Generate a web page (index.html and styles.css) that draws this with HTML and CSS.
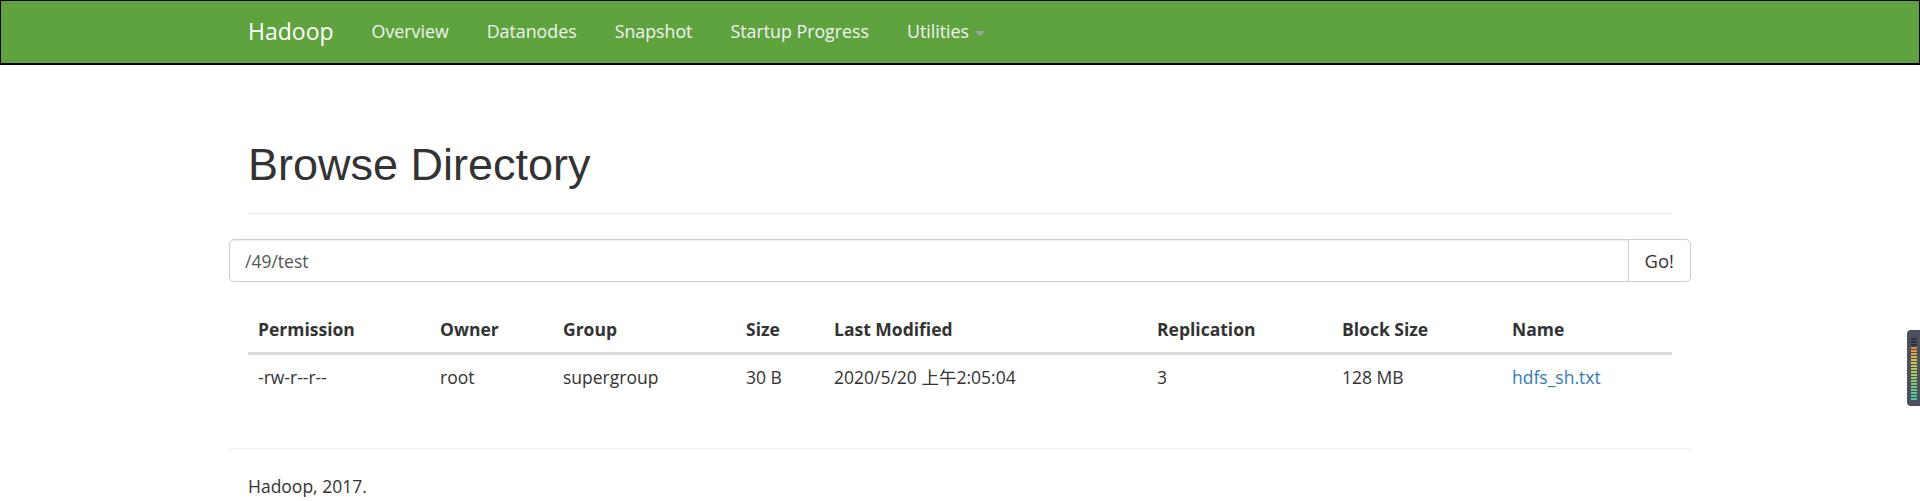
FILE: index.html
```html
<!DOCTYPE html>
<html lang="en">
<head>
  <meta charset="UTF-8" />
  <title>Browsing HDFS</title>
  <link rel="stylesheet" href="styles.css">
</head>
<body>
  <header class="navbar">
    <div class="navbar-inner">
      <a class="navbar-brand" href="#">Hadoop</a>
      <ul class="navbar-nav">
        <li><a href="#">Overview</a></li>
        <li><a href="#">Datanodes</a></li>
        <li><a href="#">Snapshot</a></li>
        <li><a href="#">Startup Progress</a></li>
        <li><a href="#">Utilities <span class="caret"></span></a></li>
      </ul>
    </div>
  </header>

  <main class="container">
    <div class="page-header">
      <h1>Browse Directory</h1>
    </div>

    <div class="row">
      <form class="input-group" onsubmit="return false;">
        <input type="text" class="form-control" value="/49/test" />
        <button class="btn" type="submit">Go!</button>
      </form>
    </div>

    <div class="listing">
      <table class="table">
        <thead>
          <tr>
            <th class="col-perm">Permission</th>
            <th class="col-owner">Owner</th>
            <th class="col-group">Group</th>
            <th class="col-size">Size</th>
            <th class="col-mod">Last Modified</th>
            <th class="col-repl">Replication</th>
            <th class="col-block">Block Size</th>
            <th class="col-name">Name</th>
          </tr>
        </thead>
        <tbody>
          <tr>
            <td>-rw-r--r--</td>
            <td>root</td>
            <td>supergroup</td>
            <td>30 B</td>
            <td>2020/5/20 上午2:05:04</td>
            <td>3</td>
            <td>128 MB</td>
            <td><a href="#">hdfs_sh.txt</a></td>
          </tr>
        </tbody>
      </table>
    </div>

    <footer class="row page-footer">
      <hr />
      <p>Hadoop, 2017.</p>
    </footer>
  </main>

  <!-- desktop level meter overlay -->
  <div class="meter"><div class="meter-bars"></div></div>
</body>
</html>
```

FILE: styles.css
```css
body {
  margin: 0;
  font-family: "Open Sans", "Noto Sans CJK SC", sans-serif;
  font-size: 17.5px;
  line-height: 25px;
  color: #333;
  background: #fff;
}
a {
  color: #337ab7;
  text-decoration: none;
}

.navbar {
  background-color: #5fa33e;
  border: 1px solid #000;
  border-bottom-width: 2px;
  height: 65px;
  box-sizing: border-box;
}
.navbar-inner {
  width: 1462px;
  margin: 0 auto;
  padding: 0 19px;
  box-sizing: border-box;
  display: flex;
}
.navbar-brand {
  margin-left: -19px;
  padding: 18px 19px;
  font-size: 23px;
  line-height: 25px;
  color: #fff;
}
.navbar-nav {
  list-style: none;
  margin: 0;
  padding: 0;
  display: flex;
}
.navbar-nav a {
  display: block;
  padding: 18px 19px;
  font-size: 17.8px;
  color: #f2f2f2;
}
.caret {
  display: inline-block;
  width: 0;
  height: 0;
  margin-left: 1px;
  vertical-align: middle;
  border-top: 5px solid #a3a3a3;
  border-left: 5px solid transparent;
  border-right: 5px solid transparent;
}

.container {
  width: 1462px;
  margin: 0 auto;
  padding: 0 19px;
  box-sizing: border-box;
}
.row {
  margin: 0 -19px;
}
.page-header {
  margin: 75px 0 25px;
  padding-bottom: 11px;
  border-bottom: 1px solid #eee;
}
.page-header h1 {
  margin: 0 0 12.5px;
  font-family: "Liberation Sans", Arial, sans-serif;
  font-size: 45px;
  font-weight: normal;
  line-height: 49.5px;
}

.input-group {
  display: flex;
  margin: 0;
}
.form-control {
  flex: 1;
  height: 43px;
  box-sizing: border-box;
  padding: 7px 15px;
  font: inherit;
  color: #555;
  border: 1px solid #ccc;
  border-radius: 5px 0 0 5px;
  box-shadow: inset 0 1px 1px rgba(0,0,0,0.075);
  outline: none;
}
.btn {
  height: 43px;
  margin-left: -1px;
  padding: 7px 16px;
  font: inherit;
  font-size: 18.5px;
  color: #333;
  background: #fff;
  border: 1px solid #ccc;
  border-radius: 0 5px 5px 0;
  cursor: pointer;
}

.listing {
  margin-top: 25px;
}
.table {
  width: 100%;
  table-layout: fixed;
  border-collapse: collapse;
  margin-bottom: 48px;
}
.table th {
  box-sizing: border-box;
  text-align: left;
  font-weight: bold;
  padding: 10px;
  border-bottom: 3px solid #ddd;
}
.table td {
  padding: 10px;
  white-space: nowrap;
}
.col-perm { width: 182px; }
.col-owner { width: 123px; }
.col-group { width: 183px; }
.col-size { width: 88px; }
.col-mod { width: 323px; }
.col-repl { width: 185px; }
.col-block { width: 170px; }

.page-footer hr {
  margin: 25px 0;
  border: 0;
  border-top: 1px solid #eee;
}
.page-footer p {
  margin: 0 0 12px;
  padding: 0 19px;
}

.meter {
  position: fixed;
  top: 330px;
  right: 0;
  width: 13px;
  height: 76px;
  background: #4b505c;
  border-radius: 4px 0 0 4px;
  padding: 8px 3px 6px 4px;
  box-sizing: border-box;
}
.meter-bars {
  height: 100%;
  background:
    repeating-linear-gradient(to bottom, transparent 0 2px, #4b505c 2px 3px),
    linear-gradient(to bottom, #2c3038 0 14%, #e3843d 14%, #dcc04a 35%, #9ccf5a 60%, #3fc8a8 100%);
}
```
